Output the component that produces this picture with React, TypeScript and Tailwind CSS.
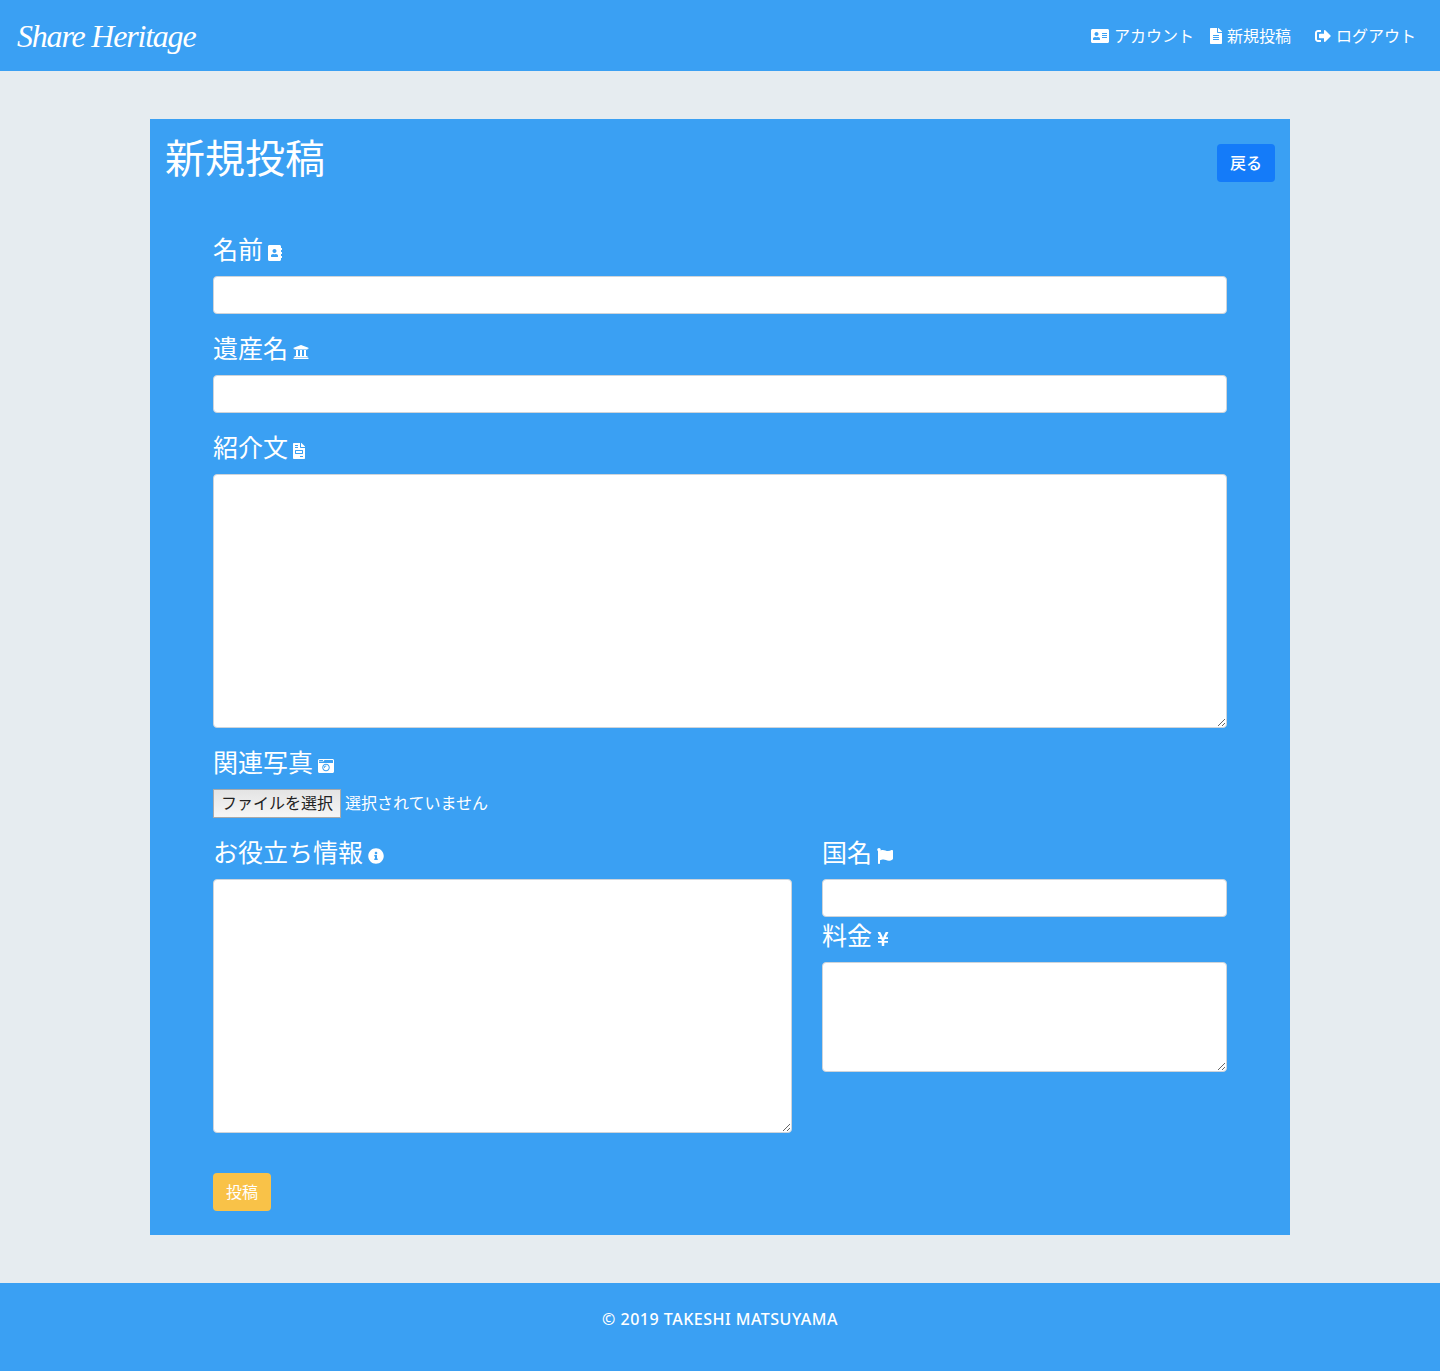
import React from "react";
import {
  FaAddressBook,
  FaAddressCard,
  FaCameraRetro,
  FaFileAlt,
  FaFileInvoice,
  FaFlag,
  FaInfoCircle,
  FaSignOutAlt,
  FaUniversity,
  FaYenSign,
} from "react-icons/fa";

const field =
  "block w-full rounded-[4px] border border-[#ced4da] bg-white px-3 py-1.5 text-base text-[#495057] outline-none";

function Label({ text, children, id }: { text: string; children: React.ReactNode; id: string }) {
  return (
    <label htmlFor={id} className="mb-2 flex h-[37px] items-center text-[25px] font-normal leading-[37px]">
      <span className="pt-0.5">{text}</span>
      <span className="ml-[5px] mt-[7px] text-base">{children}</span>
    </label>
  );
}

function NavLink({ text, children, className }: { text: string; children: React.ReactNode; className: string }) {
  return (
    <a href="#" className={`flex items-center gap-[5px] ${className}`}>
      {children}
      <span className="pt-0.5">{text}</span>
    </a>
  );
}

export default function App() {
  return (
    <div className="flex min-h-[1371px] flex-col bg-[#e6ecf0] font-['Liberation_Sans','Noto_Sans_CJK_JP',sans-serif] text-base font-medium leading-6 text-white">
      <header className="flex h-[71px] items-center justify-between bg-[#3aa0f3] pl-[17px] pr-6">
        <a href="#" className="whitespace-nowrap font-['Apple_Chancery','Z003','URW_Chancery_L','Liberation_Serif',serif] text-[32px] italic leading-[48px] tracking-[-1.2px]">
          Share Heritage
        </a>
        <nav className="flex items-center font-normal">
          <NavLink text="アカウント" className="mr-4"><FaAddressCard className="h-4 w-[18px]" /></NavLink>
          <NavLink text="新規投稿" className="mr-6"><FaFileAlt className="h-4 w-3" /></NavLink>
          <NavLink text="ログアウト" className=""><FaSignOutAlt className="h-4 w-4" /></NavLink>
        </nav>
      </header>

      <main className="mx-auto mt-12 h-[1116px] w-[1140px] bg-[#3aa0f3]">
        <div className="flex items-start justify-between px-[15px] pt-4">
          <h1 className="text-[40px] font-normal leading-[48px]">新規投稿</h1>
          <button className="mt-[9px] h-[38px] w-[58px] rounded-[4px] bg-[#147bf9] pt-px leading-6">戻る</button>
        </div>

        <form className="mx-[63px] mt-12">
          <div className="mb-4">
            <Label id="name" text="名前"><FaAddressBook className="h-4 w-[14px]" /></Label>
            <input id="name" className={`${field} h-[38px]`} />
          </div>
          <div className="mb-4">
            <Label id="heritage" text="遺産名"><FaUniversity /></Label>
            <input id="heritage" className={`${field} h-[38px]`} />
          </div>
          <div className="mb-4">
            <Label id="intro" text="紹介文"><FaFileInvoice className="h-4 w-3" /></Label>
            <textarea id="intro" className={`${field} h-[254px]`} />
          </div>
          <div className="mb-4">
            <Label id="photo" text="関連写真"><FaCameraRetro /></Label>
            <div className="flex h-[29px] items-center">
              <button type="button" id="photo" className="h-[29px] w-[128px] border border-[#a9a9a9] bg-linear-to-b from-[#e4e4e4] to-[#f6f6f6] text-center font-normal leading-[26px] text-[#222]">
                ファイルを選択
              </button>
              <span className="ml-1 font-normal">選択されていません</span>
            </div>
          </div>
          <div className="flex gap-[30px]">
            <div className="w-[579px]">
              <Label id="info" text="お役立ち情報"><FaInfoCircle /></Label>
              <textarea id="info" className={`${field} h-[254px]`} />
            </div>
            <div className="w-[405px]">
              <Label id="country" text="国名"><FaFlag /></Label>
              <input id="country" className={`${field} h-[38px]`} />
              <Label id="fee" text="料金"><FaYenSign className="h-4 w-3" /></Label>
              <textarea id="fee" className={`${field} h-[110px]`} />
            </div>
          </div>
          <button type="button" className="mt-10 h-[38px] w-[58px] rounded-[4px] bg-[#f9c248] pt-px font-normal leading-6">投稿</button>
        </form>
      </main>

      <footer className="mt-12 flex h-[88px] justify-center bg-[#3aa0f3] pt-6">
        <p className="whitespace-nowrap font-['Lucida_Grande','Noto_Sans',sans-serif] text-base font-medium leading-6 tracking-[0.5px]">© 2019 TAKESHI MATSUYAMA</p>
      </footer>
    </div>
  );
}
